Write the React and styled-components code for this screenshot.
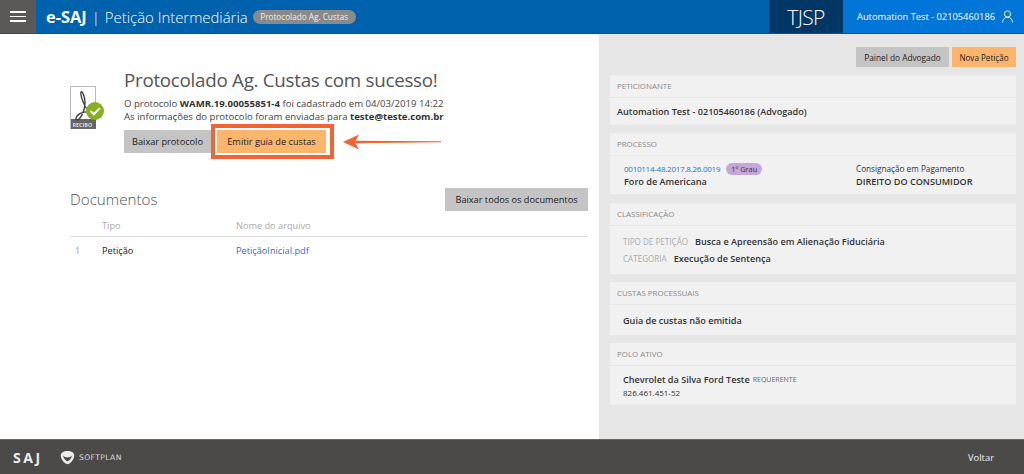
import React from "react";
import styled, { createGlobalStyle } from "styled-components";
import { UserRound } from "lucide-react";

const Global = createGlobalStyle`
  html, body { margin: 0; padding: 0; height: 100%; overflow: hidden; }
  #root { height: 100%; }
  * { box-sizing: border-box; }
  body { font-family: "Open Sans", "Noto Sans", sans-serif; color: #333; background: #fff; }
`;

const Page = styled.div`
  width: 1024px; height: 474px; display: flex; flex-direction: column;
`;
const Header = styled.header`
  height: 34px; flex: none; display: flex; align-items: stretch; background: #0061ad;
  color: #fff; border-bottom: 1px solid #00579c;
`;
const Menu = styled.div`
  width: 36px; background: #5b5855; display: flex; flex-direction: column; justify-content: center;
  align-items: center; gap: 3px;
  span { width: 16px; height: 1.5px; background: #fff; display: block; }
`;
const Brand = styled.div`
  flex: 1; min-width: 0; display: flex; align-items: center; padding-left: 10px; line-height: 34px; white-space: nowrap;
  b { font-weight: 700; font-size: 16.4px; }
  i { font-style: normal; font-weight: 300; font-size: 15px; margin: 0 5px; }
  span { font-weight: 300; font-size: 14.9px; }
`;
const Status = styled.em`
  font-style: normal; margin-left: 5px; height: 14px; width: 103px; border-radius: 7px; background: #8a8a8a;
  color: #eee; font-size: 8.2px; line-height: 13px; text-align: center;
`;
const Court = styled.div`
  width: 74px; flex: none; background: #003764; font-size: 21px; font-weight: 300; text-align: center; line-height: 34px;
  letter-spacing: -.6px;
`;
const User = styled.div`
  width: 181px; flex: none; background: #0275d8; display: flex; align-items: center; padding-left: 14px; gap: 5px;
  font-size: 9.3px; white-space: nowrap; color: #fff;
  svg { flex: none; display: block; }
`;

const Main = styled.main`
  flex: 1; display: flex; min-height: 0;
`;
const Left = styled.section`
  width: 599px; padding: 35px 11px 0 70px; background: #fff;
`;
const Result = styled.div`
  display: flex; align-items: flex-start;
`;
const ReceiptBox = styled.div`
  width: 54px; padding-top: 17px; flex: none;
`;
const ResultBody = styled.div`
  flex: 1;
`;
const Title = styled.h1`
  margin: 0; font-size: 18.8px; font-weight: 400; line-height: 23px; letter-spacing: -.28px; color: #555; white-space: nowrap;
`;
const Info = styled.p`
  margin: 5px 0 0; font-size: 9.6px; line-height: 13px; color: #444; white-space: nowrap;
  b { color: #333; font-weight: 700; }
`;
const Actions = styled.div`
  display: flex; align-items: center; margin-top: 1px;
`;
const Button = styled.div`
  height: ${p => p.$h || 23}px; width: ${p => p.$w}px; flex: none; background: ${p => p.$primary ? "#fdb56c" : "#c4c4c4"};
  color: #222; font-size: ${p => p.$fs || 9.2}px; display: flex; align-items: center; justify-content: center;
  white-space: nowrap;
`;
const Frame = styled.div`
  width: 123px; height: 35px; border: 4px solid #f26531; padding: 2px 4px 2px 2px; background: #fff;
  display: flex; align-items: center;
`;
const Arrow = styled.svg`
  margin-left: 9px; flex: none;
`;
const DocHead = styled.div`
  display: flex; align-items: center; justify-content: space-between; margin-top: 29px;
`;
const DocTitle = styled.h2`
  margin: 0 0 2px; font-size: 15.2px; font-weight: 300; color: #555;
`;
const DocRow = styled.div`
  display: grid; grid-template-columns: 32px 134px 1fr; align-items: center; font-size: 9.2px;
  height: 26px; padding-top: ${p => p.$head ? 4 : 0}px;
  border-bottom: ${p => p.$head ? "1px solid #ddd" : "none"};
  color: ${p => p.$head ? "#aaa" : "#222"};
`;
const Index = styled.span`
  color: #999; padding-left: 5px;
`;
const DocLink = styled.span`
  color: #1d78c1;
`;

const Side = styled.aside`
  flex: 1; background: #e6e6e6; padding: 13px 8px 0 11px; display: flex; flex-direction: column;
`;
const SideActions = styled.div`
  display: flex; justify-content: flex-end; gap: 3px; margin-bottom: 8px;
`;
const Card = styled.div`
  background: #f1f1f1; margin-bottom: ${p => p.$mb || 8}px; height: ${p => p.$h}px; display: flex; flex-direction: column;
`;
const CardHead = styled.div`
  height: 23px; flex: none; padding-left: 7px; border-bottom: 1px solid #e6e6e6; font-size: 7.9px; line-height: 22px;
  color: #888;
`;
const CardBody = styled.div`
  flex: 1; padding: ${p => p.$pad || "0 7px"}; display: flex; flex-direction: column; justify-content: center;
  font-size: 9.1px; font-weight: 600; color: #333;
`;
const ProcGrid = styled.div`
  display: grid; grid-template-columns: 232px 1fr; padding-left: 7px; line-height: 13px;
`;
const Line = styled.div`
  display: flex; align-items: center; white-space: nowrap;
  font-size: ${p => p.$fs || 9.1}px; font-weight: ${p => p.$w || 600}; line-height: ${p => p.$lh || 13}px;
`;
const ProcLink = styled.span`
  color: #1d78c1; font-size: 8px; font-weight: 400; letter-spacing: -.25px;
`;
const Grade = styled.span`
  margin-left: 6px; width: 36px; height: 12px; border-radius: 6px; background: #c7a6dc; color: #333; font-size: 7.4px;
  line-height: 12px; text-align: center; font-weight: 400;
`;
const Label = styled.span`
  color: #aaa; font-size: 8.1px; font-weight: 400; margin-right: 7px;
`;
const Role = styled.span`
  color: #666; font-size: 7px; font-weight: 400; margin-left: 3px;
`;

const Footer = styled.footer`
  height: 35px; flex: none; background: #4b4a48; border-top: 1px solid #666; color: #eee; display: flex; align-items: center;
  padding: 0 30px 0 13px;
`;
const SajLogo = styled.span`
  font-size: 14px; font-weight: 700; letter-spacing: 2.6px; color: #eee; width: 47px;
`;
const SoftLogo = styled.span`
  font-size: 7.6px; letter-spacing: .4px; margin-left: 4px; font-family: "DejaVu Sans", sans-serif; color: #ddd; flex: 1;
`;
const Back = styled.span`
  font-size: 9.4px;
`;

const ReceiptIcon = () => (
  <svg width="35" height="44" viewBox="0 0 35 44">
    <rect x=".5" y=".5" width="25" height="42" fill="#fff" stroke="#bbb" />
    <rect x="1" y="33" width="25" height="10" fill="#666" />
    <text x="2.5" y="40.5" fontSize="5.4" fontWeight="700" fill="#ddd" fontFamily="Open Sans">RECIBO</text>
    <path d="M11 6c-1 3 1 7 3 12s4 7 9 8c-5-1-13 0-16 4-3 4 1 5 3 2 3-4 5-10 5-16 0-5-3-12-4-10z" fill="none" stroke="#444" strokeWidth="1.4" />
    <circle cx="25" cy="25" r="9" fill="#86b01f" />
    <path d="M20.5 25l3.3 3.3 6-6.2" fill="none" stroke="#fff" strokeWidth="2" />
  </svg>
);

const SoftMark = () => (
  <svg width="15" height="15" viewBox="0 0 15 15">
    <path d="M7.5 1C3.5 1 .8 2.5.8 5.5c0 4 3.5 8 6.7 8.8 3.2-.8 6.7-4.8 6.7-8.8C14.2 2.5 11.5 1 7.5 1z" fill="#eee" />
    <path d="M3 5.5c2 2.5 7 2.500 9 0-.5 3-2.500 5-4.500 6-2-1-4-3-4.500-6z" fill="#4b4a48" />
  </svg>
);

export default function App() {
  return (
    <Page>
      <Global />
      <Header>
        <Menu><span /><span /><span /></Menu>
        <Brand>
          <b>e-SAJ</b><i>|</i><span>Petição Intermediária</span>
          <Status>Protocolado Ag. Custas</Status>
        </Brand>
        <Court>TJSP</Court>
        <User>
          <span>Automation Test - 02105460186</span>
          <UserRound size={15} color="#ffffff" strokeWidth={1.4} />
        </User>
      </Header>
      <Main>
        <Left>
          <Result>
            <ReceiptBox><ReceiptIcon /></ReceiptBox>
            <ResultBody>
              <Title>Protocolado Ag. Custas com sucesso!</Title>
              <Info>
                O protocolo <b>WAMR.19.00055851-4</b> foi cadastrado em 04/03/2019 14:22<br />
                As informações do protocolo foram enviadas para <b>teste@teste.com.br</b>
              </Info>
              <Actions>
                <Button $w={87}>Baixar protocolo</Button>
                <Frame><Button $w={109} $primary>Emitir guia de custas</Button></Frame>
                <Arrow width="98" height="16" viewBox="0 0 98 16">
                  <path d="M0 8L16 .5 12.5 6.8 98 7.3V8.3L12.5 9.2 16 15.5z" fill="#f26531" />
                </Arrow>
              </Actions>
            </ResultBody>
          </Result>
          <DocHead>
            <DocTitle>Documentos</DocTitle>
            <Button $w={143}>Baixar todos os documentos</Button>
          </DocHead>
          <DocRow $head><span /><span>Tipo</span><span>Nome do arquivo</span></DocRow>
          <DocRow><Index>1</Index><span>Petição</span><DocLink>PetiçãoInicial.pdf</DocLink></DocRow>
        </Left>
        <Side>
          <SideActions>
            <Button $w={93} $h={20} $fs={8.3}>Painel do Advogado</Button>
            <Button $w={64} $h={20} $fs={8.1} $primary>Nova Petição</Button>
          </SideActions>
          <Card $h={50}>
            <CardHead>PETICIONANTE</CardHead>
            <CardBody>Automation Test - 02105460186 (Advogado)</CardBody>
          </Card>
          <Card $h={61} $mb={9}>
            <CardHead>PROCESSO</CardHead>
            <CardBody>
              <ProcGrid>
                <Line><ProcLink>0010114-48.2017.8.26.0019</ProcLink><Grade>1º Grau</Grade></Line>
                <Line $fs={8.2} $w={400}>Consignação em Pagamento</Line>
                <Line>Foro de Americana</Line>
                <Line>DIREITO DO CONSUMIDOR</Line>
              </ProcGrid>
            </CardBody>
          </Card>
          <Card $h={71}>
            <CardHead>CLASSIFICAÇÃO</CardHead>
            <CardBody $pad="0 13px">
              <Line $lh={17}><Label>TIPO DE PETIÇÃO</Label>Busca e Apreensão em Alienação Fiduciária</Line>
              <Line $lh={17}><Label>CATEGORIA</Label>Execução de Sentença</Line>
            </CardBody>
          </Card>
          <Card $h={53}>
            <CardHead>CUSTAS PROCESSUAIS</CardHead>
            <CardBody $pad="0 13px">Guia de custas não emitida</CardBody>
          </Card>
          <Card $h={62}>
            <CardHead>POLO ATIVO</CardHead>
            <CardBody $pad="0 13px">
              <Line>Chevrolet da Silva Ford Teste<Role>REQUERENTE</Role></Line>
              <Line $fs={8} $w={400} $lh={13}>826.461.451-52</Line>
            </CardBody>
          </Card>
        </Side>
      </Main>
      <Footer>
        <SajLogo>SAJ</SajLogo>
        <SoftMark />
        <SoftLogo>SOFTPLAN</SoftLogo>
        <Back>Voltar</Back>
      </Footer>
    </Page>
  );
}
